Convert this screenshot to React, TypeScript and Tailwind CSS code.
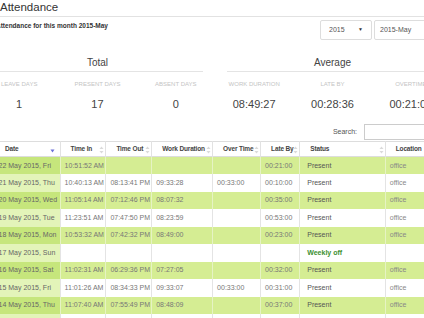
const rows = [
  { date: "22 May 2015, Fri", in: "10:51:52 AM", out: "", dur: "", over: "", late: "00:21:00", status: "Present", loc: "office" },
  { date: "21 May 2015, Thu", in: "10:40:13 AM", out: "08:13:41 PM", dur: "09:33:28", over: "00:33:00", late: "00:10:00", status: "Present", loc: "office" },
  { date: "20 May 2015, Wed", in: "11:05:14 AM", out: "07:12:46 PM", dur: "08:07:32", over: "", late: "00:35:00", status: "Present", loc: "office" },
  { date: "19 May 2015, Tue", in: "11:23:51 AM", out: "07:47:50 PM", dur: "08:23:59", over: "", late: "00:53:00", status: "Present", loc: "office" },
  { date: "18 May 2015, Mon", in: "10:53:32 AM", out: "07:42:32 PM", dur: "08:49:00", over: "", late: "00:23:00", status: "Present", loc: "office" },
  { date: "17 May 2015, Sun", in: "", out: "", dur: "", over: "", late: "", status: "Weekly off", loc: "" },
  { date: "16 May 2015, Sat", in: "11:02:31 AM", out: "06:29:36 PM", dur: "07:27:05", over: "", late: "00:32:00", status: "Present", loc: "office" },
  { date: "15 May 2015, Fri", in: "11:01:26 AM", out: "08:34:33 PM", dur: "09:33:07", over: "00:33:00", late: "00:31:00", status: "Present", loc: "office" },
  { date: "14 May 2015, Thu", in: "11:07:40 AM", out: "07:55:49 PM", dur: "08:48:09", over: "", late: "00:37:00", status: "Present", loc: "office" },
  { date: "13 May 2015, Wed", in: "10:58:12 AM", out: "07:40:10 PM", dur: "08:41:58", over: "", late: "00:28:00", status: "Present", loc: "office" },
];

const columns = [
  { label: "Date", w: "w-[66px]" },
  { label: "Time In", w: "w-[46px]" },
  { label: "Time Out", w: "w-[46px]" },
  { label: "Work Duration", w: "w-[62px]" },
  { label: "Over Time", w: "w-[49px]" },
  { label: "Late By", w: "w-[40px]" },
  { label: "Status", w: "w-[92px]" },
  { label: "Location", w: "w-[69px]" },
];

function SortBoth() {
  return (
    <svg width="5" height="8" viewBox="0 0 5 8" className="absolute right-[1px] top-[4px]">
      <path d="M2.5 0.5 L4.5 3 L0.5 3 Z" fill="#dadada" />
      <path d="M2.5 7.5 L4.5 5 L0.5 5 Z" fill="#dadada" />
    </svg>
  );
}

function SortDesc() {
  return (
    <svg width="5" height="4" viewBox="0 0 5 4" className="absolute right-[5px] top-[7px]">
      <path d="M0.5 0.5 L4.5 0.5 L2.5 3.5 Z" fill="#6b6fd8" />
    </svg>
  );
}

function Stat({ label, value }: { label: string; value: string }) {
  return (
    <div className="flex flex-col items-center">
      <div className="h-[13px] text-[6px] uppercase leading-[13px] text-[#c4c4c4]">{label}</div>
      <div className="mt-[6px] text-[11px] leading-[14px] text-[#444]">{value}</div>
    </div>
  );
}

export default function App() {
  return (
    <div className="h-[318px] w-[424px] overflow-hidden bg-white font-['Liberation_Sans',Arial,sans-serif]">
      <div className="-ml-[20px] w-[470px]">
        <div className="h-[17px] border-b border-[#e2e2e2] pl-[20px] text-[11.5px] leading-[14px] text-[#333]">
          Attendance
        </div>

        <div className="mt-[3px] flex h-[20px] items-start justify-between pr-[20px]">
          <p className="pl-[16px] pt-[2px] text-[6.5px] font-semibold leading-[8px] text-[#333]">
            Attendance for this month 2015-May
          </p>
          <div className="flex gap-[2px]">
            <div className="flex h-[20px] w-[52px] items-center justify-between rounded-[2px] border border-[#ddd] px-[8px] text-[7px] text-[#555]">
              <span>2015</span>
              <span className="text-[5px] text-[#333]">▼</span>
            </div>
            <div className="flex h-[20px] w-[56px] items-center rounded-[2px] border border-[#ddd] px-[5px] text-[7px] text-[#555]">
              2015-May
            </div>
          </div>
        </div>

        <div className="mt-[16px] flex">
          {[
            { title: "Total", stats: [["Leave Days", "1"], ["Present Days", "17"], ["Absent Days", "0"]] },
            { title: "Average", stats: [["Work Duration", "08:49:27"], ["Late By", "00:28:36"], ["Overtime", "00:21:00"]] },
          ].map((g) => (
            <div key={g.title} className="w-[235px] px-[12px]">
              <div className="border-b border-[#e4e4e4] pb-[2px] text-center text-[10px] leading-[13px] text-[#444]">
                {g.title}
              </div>
              <div className="-mx-[12px] mt-[6px] grid grid-cols-3">
                {g.stats.map(([l, v]) => (
                  <Stat key={l} label={l} value={v} />
                ))}
              </div>
            </div>
          ))}
        </div>

        <div className="mt-[13px] flex h-[17px] items-start justify-end pr-[20px]">
          <span className="mr-[7px] mt-[4px] text-[7px] leading-[8px] text-[#555]">Search:</span>
          <div className="h-[16px] w-[66px] border border-[#ccc] bg-white" />
        </div>

        <table className="ml-[14px] table-fixed border-collapse text-[7px] leading-[8px]">
          <thead>
            <tr className="h-[15px] border-t border-b border-[#ddd] bg-white">
              {columns.map((c, i) => (
                <th
                  key={c.label}
                  className={`relative ${c.w} border-l border-[#e2e2e2] pl-[10px] text-left text-[6.5px] font-bold tracking-[-0.15px] whitespace-nowrap text-[#444]`}
                >
                  {c.label}
                  {i === 0 ? <SortDesc /> : <SortBoth />}
                </th>
              ))}
            </tr>
          </thead>
          <tbody>
            {rows.map((r, i) => {
              const green = i % 2 === 0;
              return (
                <tr key={r.date} className={`h-[17.5px] ${green ? "bg-[#d5ed93]" : "bg-white"}`}>
                  <td className={`pl-[4px] whitespace-nowrap text-[#666] ${green ? "bg-[#c6e67c]" : "bg-[#e3f4b9]"}`}>
                    {r.date}
                  </td>
                  {[r.in, r.out, r.dur, r.over, r.late].map((v, j) => (
                    <td
                      key={j}
                      className={`border-l pl-[4px] whitespace-nowrap text-[#777] ${green ? "border-[#e6f3c4]" : "border-[#e4e4e4]"}`}
                    >
                      {v}
                    </td>
                  ))}
                  <td
                    className={`border-l pl-[7px] whitespace-nowrap ${
                      r.status === "Weekly off" ? "font-bold text-[#3b8f2f]" : "text-[#555]"
                    } ${green ? "border-[#e6f3c4]" : "border-[#e4e4e4]"}`}
                  >
                    {r.status}
                  </td>
                  <td className={`border-l pl-[4px] text-[#888] ${green ? "border-[#e6f3c4]" : "border-[#e4e4e4]"}`}>
                    {r.loc}
                  </td>
                </tr>
              );
            })}
          </tbody>
        </table>
      </div>
    </div>
  );
}
